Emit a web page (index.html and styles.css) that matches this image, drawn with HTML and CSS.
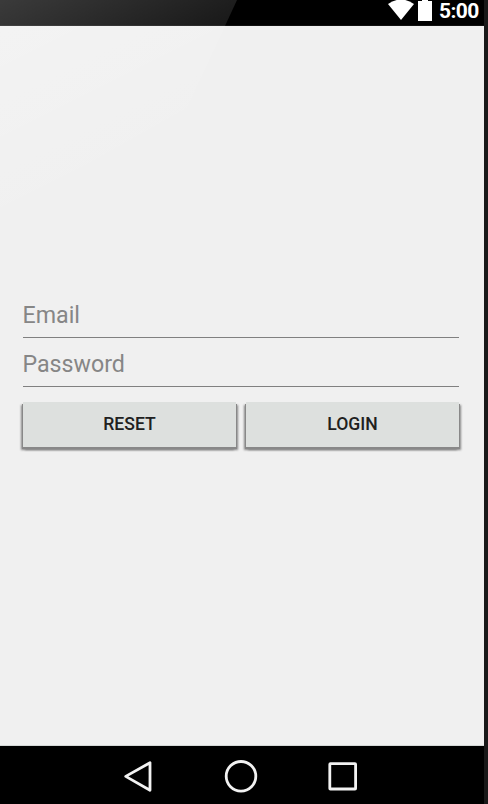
FILE: index.html
```html
<!DOCTYPE html>
<html lang="en">
<head>
<meta charset="utf-8">
<title>Login</title>
<link rel="stylesheet" href="styles.css">
</head>
<body>
<div class="device">
  <div class="screen">
    <header class="status">
      <svg class="wifi" width="26" height="26" viewBox="0 0 26 26"><path d="M0 4Q13-5 26 4L13 20Z" fill="#fff"/></svg>
      <svg class="battery" width="14" height="26" viewBox="0 0 14 26"><path d="M0 1H4V-1H10V1H14V21H0Z" fill="#fff"/></svg>
      <span class="time">5:00</span>
    </header>
    <main class="content">
      <div class="field">Email</div>
      <div class="field">Password</div>
      <div class="actions">
        <button class="btn">RESET</button>
        <button class="btn">LOGIN</button>
      </div>
    </main>
    <nav class="nav">
      <svg width="484" height="58" viewBox="0 0 484 58" fill="none" stroke="#f2f2f2" stroke-width="2.8" stroke-linejoin="round">
        <path d="M125.7 30.4L150 16.7V44.3Z"/>
        <circle cx="241" cy="30.3" r="14.8"/>
        <rect x="329.8" y="17.6" width="25.8" height="25.4" rx="0.6"/>
      </svg>
    </nav>
    <svg class="glare" width="484" height="260" viewBox="0 0 484 260">
      <defs><linearGradient id="shine" gradientUnits="userSpaceOnUse" x1="0" y1="0" x2="97" y2="194">
        <stop offset="0" stop-color="#fff" stop-opacity=".23"/>
        <stop offset="1" stop-color="#fff" stop-opacity="0"/>
      </linearGradient></defs>
      <path d="M0 0H237L187 108L0 214Z" fill="url(#shine)"/>
    </svg>
  </div>
</div>
</body>
</html>
```
FILE: styles.css
```css
* { box-sizing: border-box; }
body { margin: 0; font-family: Roboto, sans-serif; }
.device {
  height: 804px;
  padding-right: 4px;
  background: #191919;
  overflow: hidden;
}
.screen {
  position: relative;
  height: 804px;
  display: flex;
  flex-direction: column;
  background: #f0f0f0;
}
.status {
  height: 26px;
  display: flex;
  justify-content: flex-end;
  padding-right: 5px;
  background: #000;
  border-bottom: 1px solid #111;
  color: #fff;
}
.wifi { margin-right: 4px; }
.battery { margin-right: 7px; }
.time {
  width: 40px;
  font-size: 21px;
  line-height: 23px;
  font-weight: 700;
  letter-spacing: -.6px;
  white-space: nowrap;
}
.content {
  flex: 1;
  padding: 265px 25px 0 23px;
  border-bottom: 1px solid #d4d8d6;
}
.field {
  height: 49px;
  padding-top: 11px;
  background: linear-gradient(#808080, #808080) 0 46px / 100% 1px no-repeat;
  color: #868686;
  font-size: 23.2px;
  line-height: 26px;
  text-indent: -.5px;
}
.actions {
  display: flex;
  gap: 10px;
  padding-top: 13px;
}
.btn {
  flex: 1;
  height: 45px;
  padding: 0;
  border: 0;
  background: #dde0de;
  box-shadow: -1px 2px 0 #888, 1px 2px 0 #888, -2px 3px 2px #888, 2px 3px 2px #888;
  color: #202020;
  font: 500 17.6px/43px Roboto, sans-serif;
}
.nav {
  height: 58px;
  background: #000;
}
.nav svg { display: block; }
.glare {
  position: absolute;
  top: 0;
  left: 0;
  pointer-events: none;
}
```
